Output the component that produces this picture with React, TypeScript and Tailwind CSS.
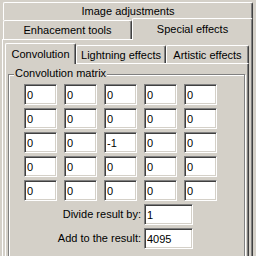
import clsx from "clsx";
import type { ReactNode } from "react";

const matrix = [
  ["0", "0", "0", "0", "0"],
  ["0", "0", "0", "0", "0"],
  ["0", "0", "-1", "0", "0"],
  ["0", "0", "0", "0", "0"],
  ["0", "0", "0", "0", "0"],
];

function Tab({
  children,
  selected,
  className,
}: {
  children: ReactNode;
  selected?: boolean;
  className?: string;
}) {
  return (
    <div
      className={clsx(
        "flex shrink-0 items-center justify-center rounded-t-[2px] border-t border-r border-l border-t-white border-r-[#404040] border-l-white bg-[#d4d0c8] whitespace-nowrap shadow-[inset_-1px_0_0_#808080]",
        selected && "relative z-10",
        className
      )}
    >
      {children}
    </div>
  );
}

function Field({ value, className }: { value: string; className?: string }) {
  return (
    <input
      readOnly
      value={value}
      className={clsx(
        "h-[21px] border border-[#808080] border-r-white border-b-white bg-white pl-[2px] text-black outline-none shadow-[inset_1px_1px_0_#404040,inset_-1px_-1px_0_#d4d0c8]",
        className
      )}
    />
  );
}

export default function App() {
  return (
    <div className="h-[256px] w-[256px] overflow-hidden bg-[#d4d0c8] pt-[2px] pl-[2px] font-['Liberation_Sans',Arial,sans-serif] text-[11px] leading-[13px] text-black">
      <div className="w-[251px]">
        <div className="flex h-[18px]">
          <Tab className="ml-[1px] h-[18px] w-[250px]">Image adjustments</Tab>
        </div>
        <div className="flex h-[19px] items-start">
          <Tab className="ml-[1px] h-[19px] w-[129px] pt-[1px]">Enhacement tools</Tab>
          <Tab selected className="-mt-[2px] h-[22px] w-[121px]">
            Special effects
          </Tab>
        </div>

        <div className="h-[230px] border-t border-r border-l border-t-white border-r-[#404040] border-l-white px-[2px] pt-[5px] shadow-[inset_-1px_0_0_#808080]">
          <div className="flex h-[18px] items-start">
            <Tab selected className="-mt-[2px] h-[21px] w-[71px]">
              Convolution
            </Tab>
            <Tab className="h-[18px] w-[90px] pt-[2px]">Lightning effects</Tab>
            <Tab className="h-[18px] w-[83px] pt-[2px]">Artistic effects</Tab>
          </div>

          <div className="h-[200px] w-[244px] border-t border-r border-l border-t-white border-r-[#404040] border-l-white pt-[10px] pl-[2px] shadow-[inset_-1px_0_0_#808080]">
            <div className="relative h-[190px] w-[237px] border border-[#808080] pt-[9px] pl-[15px] shadow-[inset_1px_1px_0_#fff,1px_1px_0_#fff]">
              <span className="absolute -top-[8px] left-[5px] bg-[#d4d0c8] px-[1px]">
                Convolution matrix
              </span>

              <div className="flex flex-col gap-[3px]">
                <div className="grid grid-cols-[repeat(5,33px)] gap-x-[7px] gap-y-[3px]">
                  {matrix.flat().map((v, i) => (
                    <Field key={i} value={v} className="w-[33px]" />
                  ))}
                </div>
                <div className="flex items-center gap-[3px]">
                  <span className="w-[117px] text-right">Divide result by:</span>
                  <Field value="1" className="w-[49px]" />
                </div>
                <div className="flex items-center gap-[3px]">
                  <span className="w-[117px] text-right">Add to the result:</span>
                  <Field value="4095" className="w-[49px]" />
                </div>
              </div>
            </div>
          </div>
        </div>
      </div>
    </div>
  );
}
